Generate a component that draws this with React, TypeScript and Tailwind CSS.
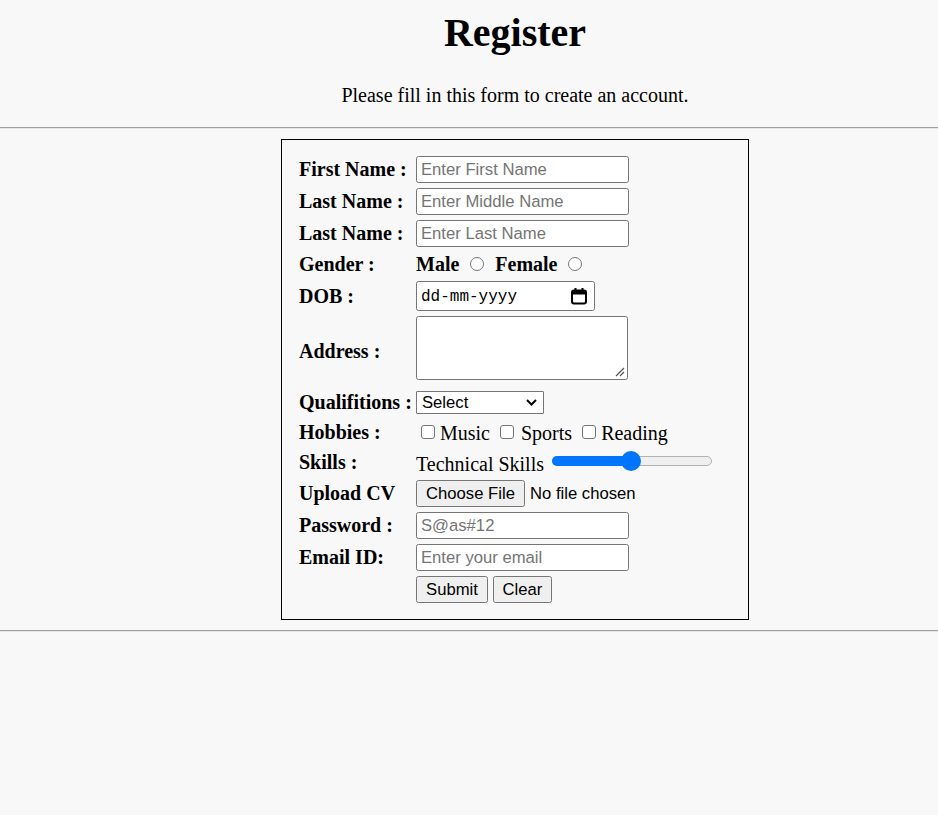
import React from 'react'

const sans = "font-['Liberation_Sans',Arial,sans-serif]"

function TextField({ placeholder, type = 'text' }: { placeholder: string; type?: string }) {
  return (
    <input
      type={type}
      placeholder={placeholder}
      className={`${sans} w-[213px] h-[27px] border border-[#767676] rounded-[2.5px] bg-white px-[4px] text-[16.67px] text-black placeholder:text-[#757575] outline-none`}
    />
  )
}

function Radio() {
  return <span className="inline-block w-[14px] h-[14px] rounded-full border border-[#767676] bg-white" />
}

function Checkbox({ className = '' }: { className?: string }) {
  return <span className={`inline-block w-[14px] h-[14px] rounded-[3px] border border-[#767676] bg-white ${className}`} />
}

function GreyButton({ children, width }: { children: React.ReactNode; width: string }) {
  return (
    <button
      type="button"
      className={`${sans} ${width} h-[27px] border border-[#767676] rounded-[2.5px] bg-[#efefef] text-[16.67px] text-black flex items-center justify-center`}
    >
      {children}
    </button>
  )
}

function Label({ children }: { children: React.ReactNode }) {
  return <div className="flex items-center text-[20px] leading-[23px] font-bold whitespace-nowrap">{children}</div>
}

export default function App() {
  return (
    <div className="min-h-screen bg-[#f8f8f8] text-black font-['Liberation_Serif','Times_New_Roman',serif]">
      {/* Heading */}
      <div className="pl-[92px] flex flex-col items-center">
        <h1 className="mt-[11px] text-[40px] leading-[44px] font-bold">Register</h1>
        <p className="mt-[29px] text-[20px] leading-[23px]">Please fill in this form to create an account.</p>
      </div>

      <div className="mt-[20px] h-[2px] border-t border-b border-t-[#a0a0a0] border-b-[#e6e6e6]" />

      {/* Form box */}
      <div className="pl-[92px] mt-[10px] flex justify-center">
        <div className="w-[468px] border border-black pl-[17px] pt-[16px] pb-[16px]">
          <div className="grid grid-cols-[117px_1fr] grid-rows-[27px_27px_27px_24px_30px_70px_23px_26px_25px_27px_27px_27px_27px] gap-y-[5px]">
            <Label>First Name :</Label>
            <div className="flex items-center"><TextField placeholder="Enter First Name" /></div>

            <Label>Last Name :</Label>
            <div className="flex items-center"><TextField placeholder="Enter Middle Name" /></div>

            <Label>Last Name :</Label>
            <div className="flex items-center"><TextField placeholder="Enter Last Name" /></div>

            <Label>Gender :</Label>
            <div className="flex items-center text-[20px] leading-[23px] font-bold whitespace-nowrap">
              <span>Male</span>
              <span className="ml-[11px] flex"><Radio /></span>
              <span className="ml-[11px]">Female</span>
              <span className="ml-[10px] flex"><Radio /></span>
            </div>

            <Label>DOB :</Label>
            <div className="flex items-center">
              <div className="w-[179px] h-[30px] border border-[#767676] rounded-[2.5px] bg-white flex items-center pl-[4px] pr-[6px]">
                <span className="font-['Liberation_Mono','DejaVu_Sans_Mono',monospace] text-[16px] flex-1 mt-[2px]">dd-mm-yyyy</span>
                <svg width="18" height="18" viewBox="0 0 18 18" fill="none">
                  <rect x="2" y="3.5" width="14" height="13" rx="2" stroke="#000" strokeWidth="2" />
                  <rect x="2" y="3.5" width="14" height="4" fill="#000" />
                  <rect x="4.5" y="1" width="2" height="3" fill="#000" />
                  <rect x="11.5" y="1" width="2" height="3" fill="#000" />
                </svg>
              </div>
            </div>

            <Label>Address :</Label>
            <div className="flex items-start">
              <div className="relative w-[212px] h-[64px] border border-[#767676] rounded-[2.5px] bg-white">
                <svg className="absolute right-[2px] bottom-[2px]" width="11" height="11" viewBox="0 0 11 11">
                  <path d="M10 2 L2 10 M10 6 L6 10" stroke="#555" strokeWidth="1.2" />
                </svg>
              </div>
            </div>

            <Label>Qualifitions :</Label>
            <div className="flex items-center">
              <div className={`${sans} w-[128px] h-[23px] border border-[#767676] rounded-[1px] bg-white flex items-center pl-[5px] pr-[6px] text-[16.67px]`}>
                <span className="flex-1">Select</span>
                <svg width="11" height="7" viewBox="0 0 11 7">
                  <path d="M1 1 L5.5 5.5 L10 1" stroke="#000" strokeWidth="2" fill="none" />
                </svg>
              </div>
            </div>

            <Label>Hobbies :</Label>
            <div className="flex items-center text-[20px] leading-[23px] whitespace-nowrap">
              <Checkbox className="ml-[5px]" />
              <span className="mt-[3px] ml-[5px]">Music</span>
              <Checkbox className="ml-[10px]" />
              <span className="mt-[3px] ml-[7px]">Sports</span>
              <Checkbox className="ml-[10px]" />
              <span className="mt-[3px] ml-[5px]">Reading</span>
            </div>

            <Label>Skills :</Label>
            <div className="flex items-center text-[20px] leading-[23px] whitespace-nowrap">
              <span className="mt-[3px]">Technical Skills</span>
              <div className="relative ml-[8px] w-[160px] h-[20px] flex items-center mb-[3px]">
                <div className="w-full h-[10px] rounded-full bg-[#efefef] border border-[#b2b2b2]" />
                <div className="absolute left-0 w-[80px] h-[10px] rounded-l-full bg-[#0075ff]" />
                <div className="absolute left-[69px] w-[20px] h-[20px] rounded-full bg-[#0075ff]" />
              </div>
            </div>

            <Label>Upload CV</Label>
            <div className={`${sans} flex items-center text-[16.67px] whitespace-nowrap`}>
              <GreyButton width="w-[109px]">Choose File</GreyButton>
              <span className="ml-[5px]">No file chosen</span>
            </div>

            <Label>Password :</Label>
            <div className="flex items-center"><TextField type="password" placeholder="S@as#12" /></div>

            <Label>Email ID:</Label>
            <div className="flex items-center"><TextField type="email" placeholder="Enter your email" /></div>

            <div />
            <div className="flex items-center gap-[5px]">
              <GreyButton width="w-[72px]">Submit</GreyButton>
              <GreyButton width="w-[59px]">Clear</GreyButton>
            </div>
          </div>
        </div>
      </div>

      <div className="mt-[10px] h-[2px] border-t border-b border-t-[#a0a0a0] border-b-[#e6e6e6]" />
    </div>
  )
}
